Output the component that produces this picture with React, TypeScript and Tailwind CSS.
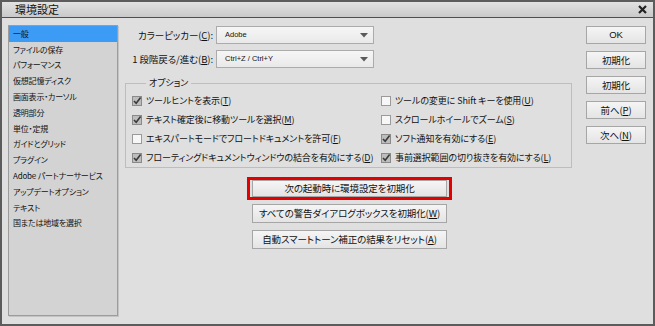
import React from "react";

const sidebarItems = [
  "一般",
  "ファイルの保存",
  "パフォーマンス",
  "仮想記憶ディスク",
  "画面表示・カーソル",
  "透明部分",
  "単位・定規",
  "ガイドとグリッド",
  "プラグイン",
  "Adobe パートナーサービス",
  "アップデートオプション",
  "テキスト",
  "国または地域を選択",
];

type Opt = { label: string; key: string; checked: boolean };

const leftOptions: Opt[] = [
  { label: "ツールヒントを表示", key: "T", checked: true },
  { label: "テキスト確定後に移動ツールを選択", key: "M", checked: true },
  { label: "エキスパートモードでフロートドキュメントを許可", key: "F", checked: false },
  { label: "フローティングドキュメントウィンドウの結合を有効にする", key: "D", checked: true },
];

const rightOptions: Opt[] = [
  { label: "ツールの変更に Shift キーを使用", key: "U", checked: false },
  { label: "スクロールホイールでズーム", key: "S", checked: false },
  { label: "ソフト通知を有効にする", key: "E", checked: true },
  { label: "事前選択範囲の切り抜きを有効にする", key: "L", checked: true },
];

function Key({ k }: { k: string }) {
  return (
    <>
      (<span className="underline">{k}</span>)
    </>
  );
}

function CheckBox({ checked }: { checked: boolean }) {
  return (
    <svg width="10" height="10" viewBox="0 0 10 10" className="shrink-0">
      <rect
        x="0.5"
        y="0.5"
        width="9"
        height="9"
        fill={checked ? "#bdbdbd" : "#f7f7f7"}
        stroke={checked ? "#8a8a8a" : "#9a9a9a"}
      />
      {checked && (
        <path d="M2 5 L4.2 7.3 L8.6 1.6" fill="none" stroke="#3a3a3a" strokeWidth="1.6" />
      )}
    </svg>
  );
}

function OptionRow({ opt }: { opt: Opt }) {
  return (
    <div className="flex items-center h-[19px] gap-[4px] whitespace-nowrap">
      <CheckBox checked={opt.checked} />
      <span>
        {opt.label}
        <Key k={opt.key} />
      </span>
    </div>
  );
}

function Dropdown({ label, value }: { label: React.ReactNode; value: string }) {
  return (
    <div className="flex items-center h-[18px]">
      <div className="w-[91px] text-right whitespace-nowrap text-[9.5px]">{label}</div>
      <div className="ml-[3px] w-[158px] h-[18px] border border-[#ababab] bg-gradient-to-b from-[#f6f6f6] to-[#e9e9e9] flex items-center justify-between pl-[8px] pr-[5px]">
        <span className="text-[7.5px] tracking-normal font-['Liberation_Sans',sans-serif]">{value}</span>
        <svg width="8" height="5" viewBox="0 0 8 5">
          <path d="M0 0 H8 L4 4.5 Z" fill="#5a5a5a" />
        </svg>
      </div>
    </div>
  );
}

function Btn({ children, className = "" }: { children: React.ReactNode; className?: string }) {
  return (
    <div
      className={
        "border border-[#a6a6a6] bg-gradient-to-b from-[#f5f5f5] to-[#e4e4e4] flex items-center justify-center whitespace-nowrap " +
        className
      }
    >
      {children}
    </div>
  );
}

export default function App() {
  return (
    <div className="w-[655px] h-[326px] bg-[#dfdfdf] border-2 border-[#5c5c5c] flex flex-col text-[9px] tracking-[-0.1px] text-[#111] font-['Noto_Sans_CJK_JP','Noto_Sans',sans-serif] [font-feature-settings:'palt'] overflow-hidden">
      {/* title bar */}
      <div className="h-[16px] shrink-0 border-b border-[#4e4e4e] bg-gradient-to-b from-[#e2e2e2] to-[#c9c9c9] flex items-center justify-between pl-[13px] pr-[6px]">
        <span className="text-[11px] leading-none tracking-normal">環境設定</span>
        <svg width="9" height="9" viewBox="0 0 9 9">
          <path d="M1 1 L8 8 M8 1 L1 8" stroke="#222" strokeWidth="2.2" />
        </svg>
      </div>

      <div className="flex items-start pl-[6px]">
        {/* sidebar */}
        <div className="mt-[7px] w-[110px] h-[291px] border border-[#9c9c9c] bg-[#d3d3d3] shadow-[1px_1px_0_#c4c4c4]">
          {sidebarItems.map((s, i) => (
            <div
              key={s}
              className={
                "h-[15.8px] flex items-center pl-[4px] text-[8px] tracking-[-0.2px] whitespace-nowrap " +
                (i === 0 ? "bg-[#3c9cf5]" : "")
              }
            >
              {s}
            </div>
          ))}
        </div>

        {/* middle */}
        <div className="ml-[4px] mt-[8px] w-[450px] flex flex-col">
          <Dropdown
            label={
              <>
                カラーピッカー
                <Key k="C" />:
              </>
            }
            value="Adobe"
          />
          <div className="h-[6px]" />
          <Dropdown
            label={
              <>
                1 段階戻る/進む
                <Key k="B" />:
              </>
            }
            value="Ctrl+Z / Ctrl+Y"
          />

          <fieldset className="ml-[3px] mt-[8px] w-[447px] border border-[#bdbdbd] pl-[6px] pb-0">
            <legend className="ml-[14px] px-[3px] leading-[14px]">オプション</legend>
            <div className="grid grid-cols-[249px_1fr] mt-[1px]">
              <div className="flex flex-col">
                {leftOptions.map((o) => (
                  <OptionRow key={o.key} opt={o} />
                ))}
              </div>
              <div className="flex flex-col">
                {rightOptions.map((o) => (
                  <OptionRow key={o.key} opt={o} />
                ))}
              </div>
            </div>
          </fieldset>

          <div className="ml-[125px] mt-[9px] w-[205px] flex flex-col items-center">
            <div className="w-[205px] border-[3px] border-[#e30000] px-[2px]">
              <Btn className="h-[17px] text-[9.5px]">次の起動時に環境設定を初期化</Btn>
            </div>
            <Btn className="mt-[4px] w-[195px] h-[19px] text-[9.5px]">
              すべての警告ダイアログボックスを初期化
              <Key k="W" />
            </Btn>
            <Btn className="mt-[7px] w-[195px] h-[19px] text-[9.5px]">
              自動スマートトーン補正の結果をリセット
              <Key k="A" />
            </Btn>
          </div>
        </div>

        {/* right buttons */}
        <div className="ml-[14px] mt-[8px] w-[60px] flex flex-col gap-[7px] text-[9.5px]">
          <Btn className="h-[18px] font-['Liberation_Sans',sans-serif]">OK</Btn>
          <Btn className="h-[18px]">初期化</Btn>
          <Btn className="h-[18px]">初期化</Btn>
          <Btn className="h-[18px]">
            前へ
            <Key k="P" />
          </Btn>
          <Btn className="h-[18px]">
            次へ
            <Key k="N" />
          </Btn>
        </div>
      </div>
    </div>
  );
}
